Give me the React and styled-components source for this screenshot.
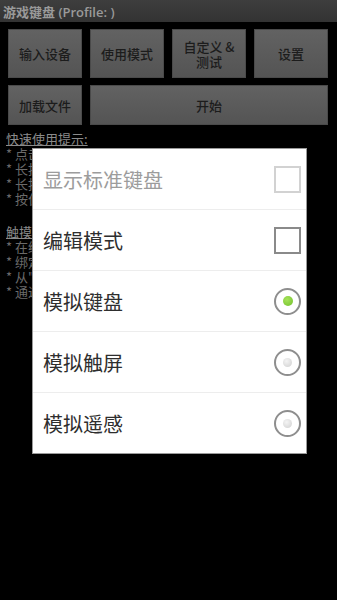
import React from "react";
import styled, { createGlobalStyle } from "styled-components";

const GlobalStyle = createGlobalStyle`
    html, body {
        margin: 0;
        padding: 0;
        background: #000;
    }
    body {
        font-family: "Noto Sans CJK SC", "Noto Sans", sans-serif;
    }
`;

const Screen = styled.div`
    position: relative;
    width: 337px;
    height: 600px;
    overflow: hidden;
    background: #000;
`;

const TitleBar = styled.div`
    height: 22px;
    display: flex;
    align-items: center;
    padding-left: 3px;
    background: linear-gradient(#3e3e3e, #333);
    color: #9a9a9a;
    font-size: 13px;
    font-family: "Open Sans", "Noto Sans CJK SC", sans-serif;
    font-weight: 600;
`;

const ButtonGrid = styled.div`
    display: grid;
    grid-template-columns: repeat(4, 1fr);
    grid-template-rows: 49px 40px;
    gap: 7px 8px;
    padding: 7px 9px 0 8px;
`;

const PanelButton = styled.div`
    grid-column: span ${(p) => p.span || 1};
    display: flex;
    align-items: center;
    justify-content: center;
    text-align: center;
    background: linear-gradient(#626262, #545454);
    border: 1px solid #4a4a4a;
    color: #1c1c1c;
    font-size: 13px;
    line-height: 15px;
    font-weight: 500;
`;

const Help = styled.div`
    padding: 6px 6px 0 6px;
    font-size: 13px;
    line-height: 15px;
    white-space: nowrap;
`;

const HelpHeader = styled.div`
    color: #8a8a8a;
    text-decoration: underline;
    margin-top: ${(p) => (p.gap ? "18px" : "0")};
`;

const HelpLine = styled.div`
    color: #6a6a6a;
`;

const Dialog = styled.div`
    position: absolute;
    left: 32px;
    top: 148px;
    width: 273px;
    background: #fff;
    border: 1px solid #9a9a9a;
`;

const Row = styled.div`
    height: 60px;
    display: flex;
    align-items: center;
    justify-content: space-between;
    padding: 0 5px 0 10px;
    border-top: ${(p) => (p.first ? "none" : "1px solid #ededed")};
    color: ${(p) => (p.disabled ? "#9c9c9c" : "#2e2e2e")};
    font-size: 20px;
`;

const Check = styled.div`
    width: 23px;
    height: 23px;
    border: 2px solid ${(p) => (p.disabled ? "#d2d2d2" : "#8a8a8a")};
    background: #fff;
`;

const Radio = styled.div`
    width: 23px;
    height: 23px;
    border-radius: 50%;
    border: 2px solid #8e8e8e;
    display: flex;
    align-items: center;
    justify-content: center;
`;

const Dot = styled.div`
    width: ${(p) => (p.on ? "10px" : "9px")};
    height: ${(p) => (p.on ? "10px" : "9px")};
    border-radius: 50%;
    background: ${(p) =>
        p.on
            ? "radial-gradient(circle at 40% 35%, #a6e35a, #72c02c)"
            : "radial-gradient(circle at 40% 35%, #f4f4f4, #cfcfcf)"};
`;

const items = [
    { label: "显示标准键盘", type: "check", disabled: true },
    { label: "编辑模式", type: "check" },
    { label: "模拟键盘", type: "radio", on: true },
    { label: "模拟触屏", type: "radio" },
    { label: "模拟遥感", type: "radio" },
];

export default function App() {
    return (
        <Screen>
            <GlobalStyle />
            <TitleBar>游戏键盘 (Profile: )</TitleBar>
            <ButtonGrid>
                <PanelButton>输入设备</PanelButton>
                <PanelButton>使用模式</PanelButton>
                <PanelButton>自定义 &amp;<br />测试</PanelButton>
                <PanelButton>设置</PanelButton>
                <PanelButton>加载文件</PanelButton>
                <PanelButton span={3}>开始</PanelButton>
            </ButtonGrid>
            <Help>
                <HelpHeader>快速使用提示:</HelpHeader>
                <HelpLine>* 点击"开始"按钮启动游戏键盘</HelpLine>
                <HelpLine>* 长按屏幕按键可以编辑按键</HelpLine>
                <HelpLine>* 长按空白处可以添加新按键</HelpLine>
                <HelpLine>* 按住菜单键可以切换模式</HelpLine>
                <HelpHeader gap>触摸模式提示:</HelpHeader>
                <HelpLine>* 在编辑模式下添加触摸点(或者屏幕上的点)</HelpLine>
                <HelpLine>* 绑定按键到触摸点</HelpLine>
                <HelpLine>* 从"使用模式"中选择模拟触屏</HelpLine>
                <HelpLine>* 通过按键来模拟触摸屏幕</HelpLine>
            </Help>
            <Dialog>
                {items.map((it, i) => (
                    <Row key={it.label} first={i === 0} disabled={it.disabled}>
                        <span>{it.label}</span>
                        {it.type === "check" ? (
                            <Check disabled={it.disabled} />
                        ) : (
                            <Radio>
                                <Dot on={it.on} />
                            </Radio>
                        )}
                    </Row>
                ))}
            </Dialog>
        </Screen>
    );
}
